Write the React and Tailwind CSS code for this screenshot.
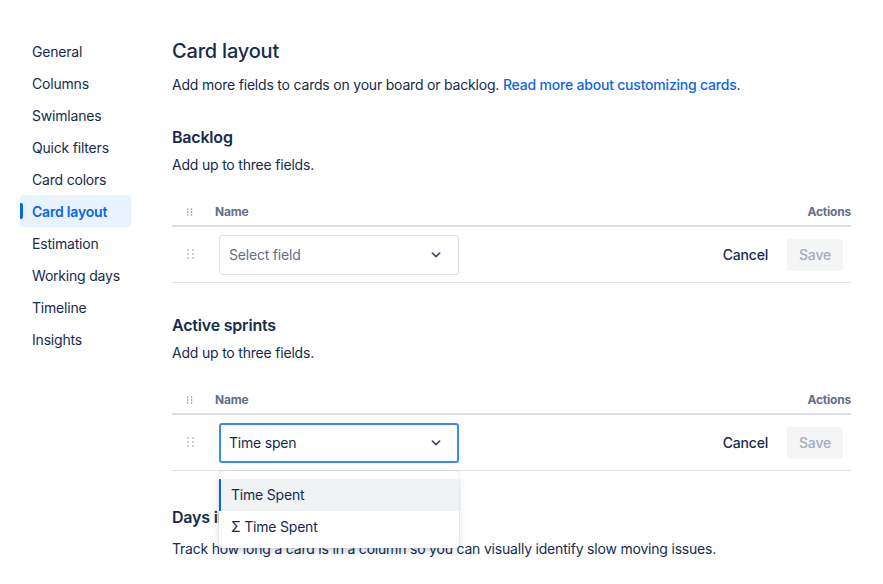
import { useState } from "react";

const navItems = [
  "General",
  "Columns",
  "Swimlanes",
  "Quick filters",
  "Card colors",
  "Card layout",
  "Estimation",
  "Working days",
  "Timeline",
  "Insights",
];

function DragDots({ className }) {
  return (
    <svg width="8" height="10" viewBox="0 0 8 10" className={className}>
      {[0, 4, 8].map((y) =>
        [0, 5].map((x) => <rect key={`${x}-${y}`} x={x} y={y} width="2" height="2" rx="0.5" fill="currentColor" />)
      )}
    </svg>
  );
}

function Chevron() {
  return (
    <svg width="10" height="6" viewBox="0 0 10 6" className="text-[#44546F]">
      <path d="M1.5 1.2 L5 4.6 L8.5 1.2" stroke="currentColor" strokeWidth="1.8" fill="none" strokeLinecap="round" strokeLinejoin="round" />
    </svg>
  );
}

function FieldTable({ value, focused, children }) {
  return (
    <div className="mt-[24px]">
      <div className="flex items-center h-[28px] border-b-2 border-[#DCDFE4] text-[12px] font-bold text-[#626F86]">
        <div className="w-[43px] flex justify-center pr-[7px]">
          <DragDots className="text-[#8590A2] scale-75" />
        </div>
        <div className="flex-1">Name</div>
        <div>Actions</div>
      </div>
      <div className="relative flex items-center h-[56px] border-b border-[#DCDFE4]">
        <div className="w-[43px] flex justify-center pr-[5px] -mt-[2px]">
          <DragDots className="text-[#C7CCD4]" />
        </div>
        <div className="flex-1 pl-1 relative">
          <div
            className={
              focused
                ? "w-[240px] h-[40px] rounded-[3px] border-2 border-[#388BFF] bg-white flex items-center justify-between pl-[8px] pr-[16px]"
                : "w-[240px] h-[40px] rounded-[3px] border border-[#DCDFE4] bg-white flex items-center justify-between pl-[9px] pr-[17px]"
            }
          >
            <span className={focused ? "text-[14px] text-[#172B4D]" : "text-[14px] text-[#626F86]"}>{value}</span>
            <Chevron />
          </div>
          {children}
        </div>
        <button className="h-8 px-3 text-[14px] font-medium text-[#172B4D]">Cancel</button>
        <button className="ml-[7px] mr-2 h-8 w-[56px] rounded-[3px] bg-[#F4F5F7] text-[14px] font-medium text-[#A5ADBA]">Save</button>
      </div>
    </div>
  );
}

export default function App() {
  const [active] = useState("Card layout");

  return (
    <div
      className="w-[883px] h-[584px] overflow-hidden bg-white text-[#172B4D] flex tracking-[-0.2px]"
      style={{ fontFamily: "Inter, 'Noto Sans', sans-serif" }}
    >
      <nav className="pl-5 pt-[35px] w-[172px] shrink-0">
        <ul className="w-[111px]">
          {navItems.map((item) =>
            item === active ? (
              <li key={item} className="relative h-8 flex items-center pl-3 rounded-[4px] bg-[#E9F2FF] text-[14px] font-semibold text-[#0C66E4]">
                <span className="absolute left-0 top-2 h-4 w-[3px] rounded-r-[2px] bg-[#0C66E4]" />
                {item}
              </li>
            ) : (
              <li key={item} className="h-8 flex items-center pl-3 text-[14px] text-[#172B4D]">
                {item}
              </li>
            )
          )}
        </ul>
      </nav>

      <main className="pt-[39px] w-[679px]">
        <h1 className="text-[20px] leading-6 font-medium">Card layout</h1>
        <p className="mt-3 text-[14px] leading-5">
          Add more fields to cards on your board or backlog.{" "}
          <a className="text-[#0C66E4] font-medium">Read more about customizing cards</a>.
        </p>

        <h2 className="mt-[30px] text-[16px] leading-6 font-semibold">Backlog</h2>
        <p className="mt-[6px] text-[14px] leading-5">Add up to three fields.</p>
        <FieldTable value="Select field" />

        <h2 className="mt-[30px] text-[16px] leading-6 font-semibold">Active sprints</h2>
        <p className="mt-[6px] text-[14px] leading-5">Add up to three fields.</p>
        <FieldTable value="Time spen" focused>
          <div className="absolute left-1 top-[48px] z-10 w-[240px] pt-2 pb-[5px] rounded-[4px] bg-white shadow-[0_4px_8px_-2px_rgba(9,30,66,0.25),0_0_1px_rgba(9,30,66,0.31)]">
            <div className="relative h-8 flex items-center pl-3 bg-[#F1F2F4] text-[14px] text-[#172B4D]">
              <span className="absolute left-0 top-0 h-full w-[2px] bg-[#0C66E4]" />
              Time Spent
            </div>
            <div className="h-8 flex items-center pl-3 text-[14px] text-[#172B4D]">Σ Time Spent</div>
          </div>
        </FieldTable>

        <h2 className="mt-[34px] text-[16px] leading-6 font-semibold">Days in column</h2>
        <p className="mt-[10px] text-[14px] leading-5">
          Track how long a card is in a column so you can visually identify slow moving issues.
        </p>
      </main>
    </div>
  );
}
